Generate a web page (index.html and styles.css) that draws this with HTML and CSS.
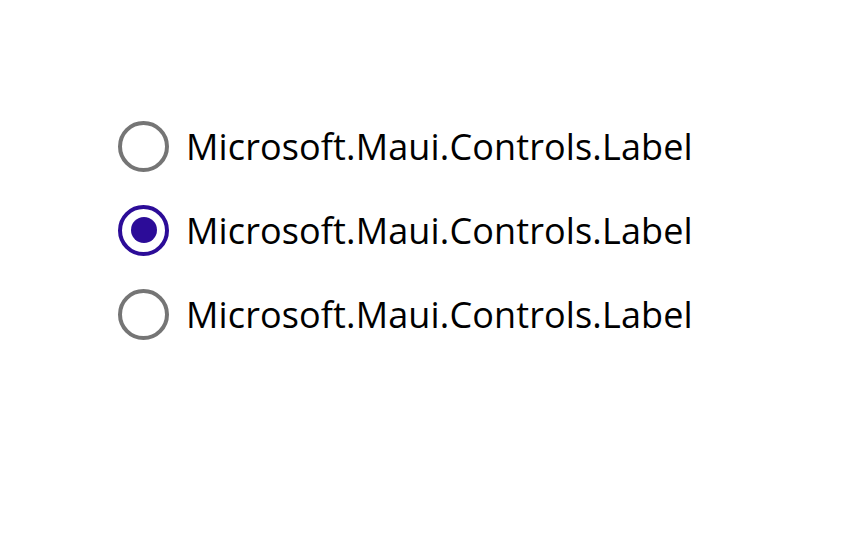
FILE: index.html
```html
<!DOCTYPE html>
<html>
<head>
<meta charset="utf-8">
<link rel="stylesheet" href="styles.css">
</head>
<body>
<div class="group">
  <div class="row">
    <span class="radio"></span>
    <span class="label">Microsoft.Maui.Controls.Label</span>
  </div>
  <div class="row">
    <span class="radio checked"><span class="dot"></span></span>
    <span class="label">Microsoft.Maui.Controls.Label</span>
  </div>
  <div class="row">
    <span class="radio"></span>
    <span class="label">Microsoft.Maui.Controls.Label</span>
  </div>
</div>
</body>
</html>
```
FILE: styles.css
```css
html, body {
  margin: 0;
  padding: 0;
  background: #ffffff;
}
body {
  width: 842px;
  height: 538px;
  overflow: hidden;
  font-family: "Open Sans", sans-serif;
}
.group {
  display: flex;
  flex-direction: column;
  padding: 104px 0 0 118px;
}
.row {
  display: flex;
  align-items: center;
  height: 84px;
  gap: 17px;
}
.radio {
  box-sizing: border-box;
  width: 51px;
  height: 51px;
  border-radius: 50%;
  border: 4.5px solid #757575;
  display: flex;
  align-items: center;
  justify-content: center;
  flex: none;
}
.radio.checked {
  border-color: #2c0c98;
}
.dot {
  width: 26px;
  height: 26px;
  border-radius: 50%;
  background: #2c0c98;
}
.label {
  font-size: 36px;
  letter-spacing: 0.14px;
  color: #000000;
  line-height: 1;
  padding-top: 2px;
}
```
